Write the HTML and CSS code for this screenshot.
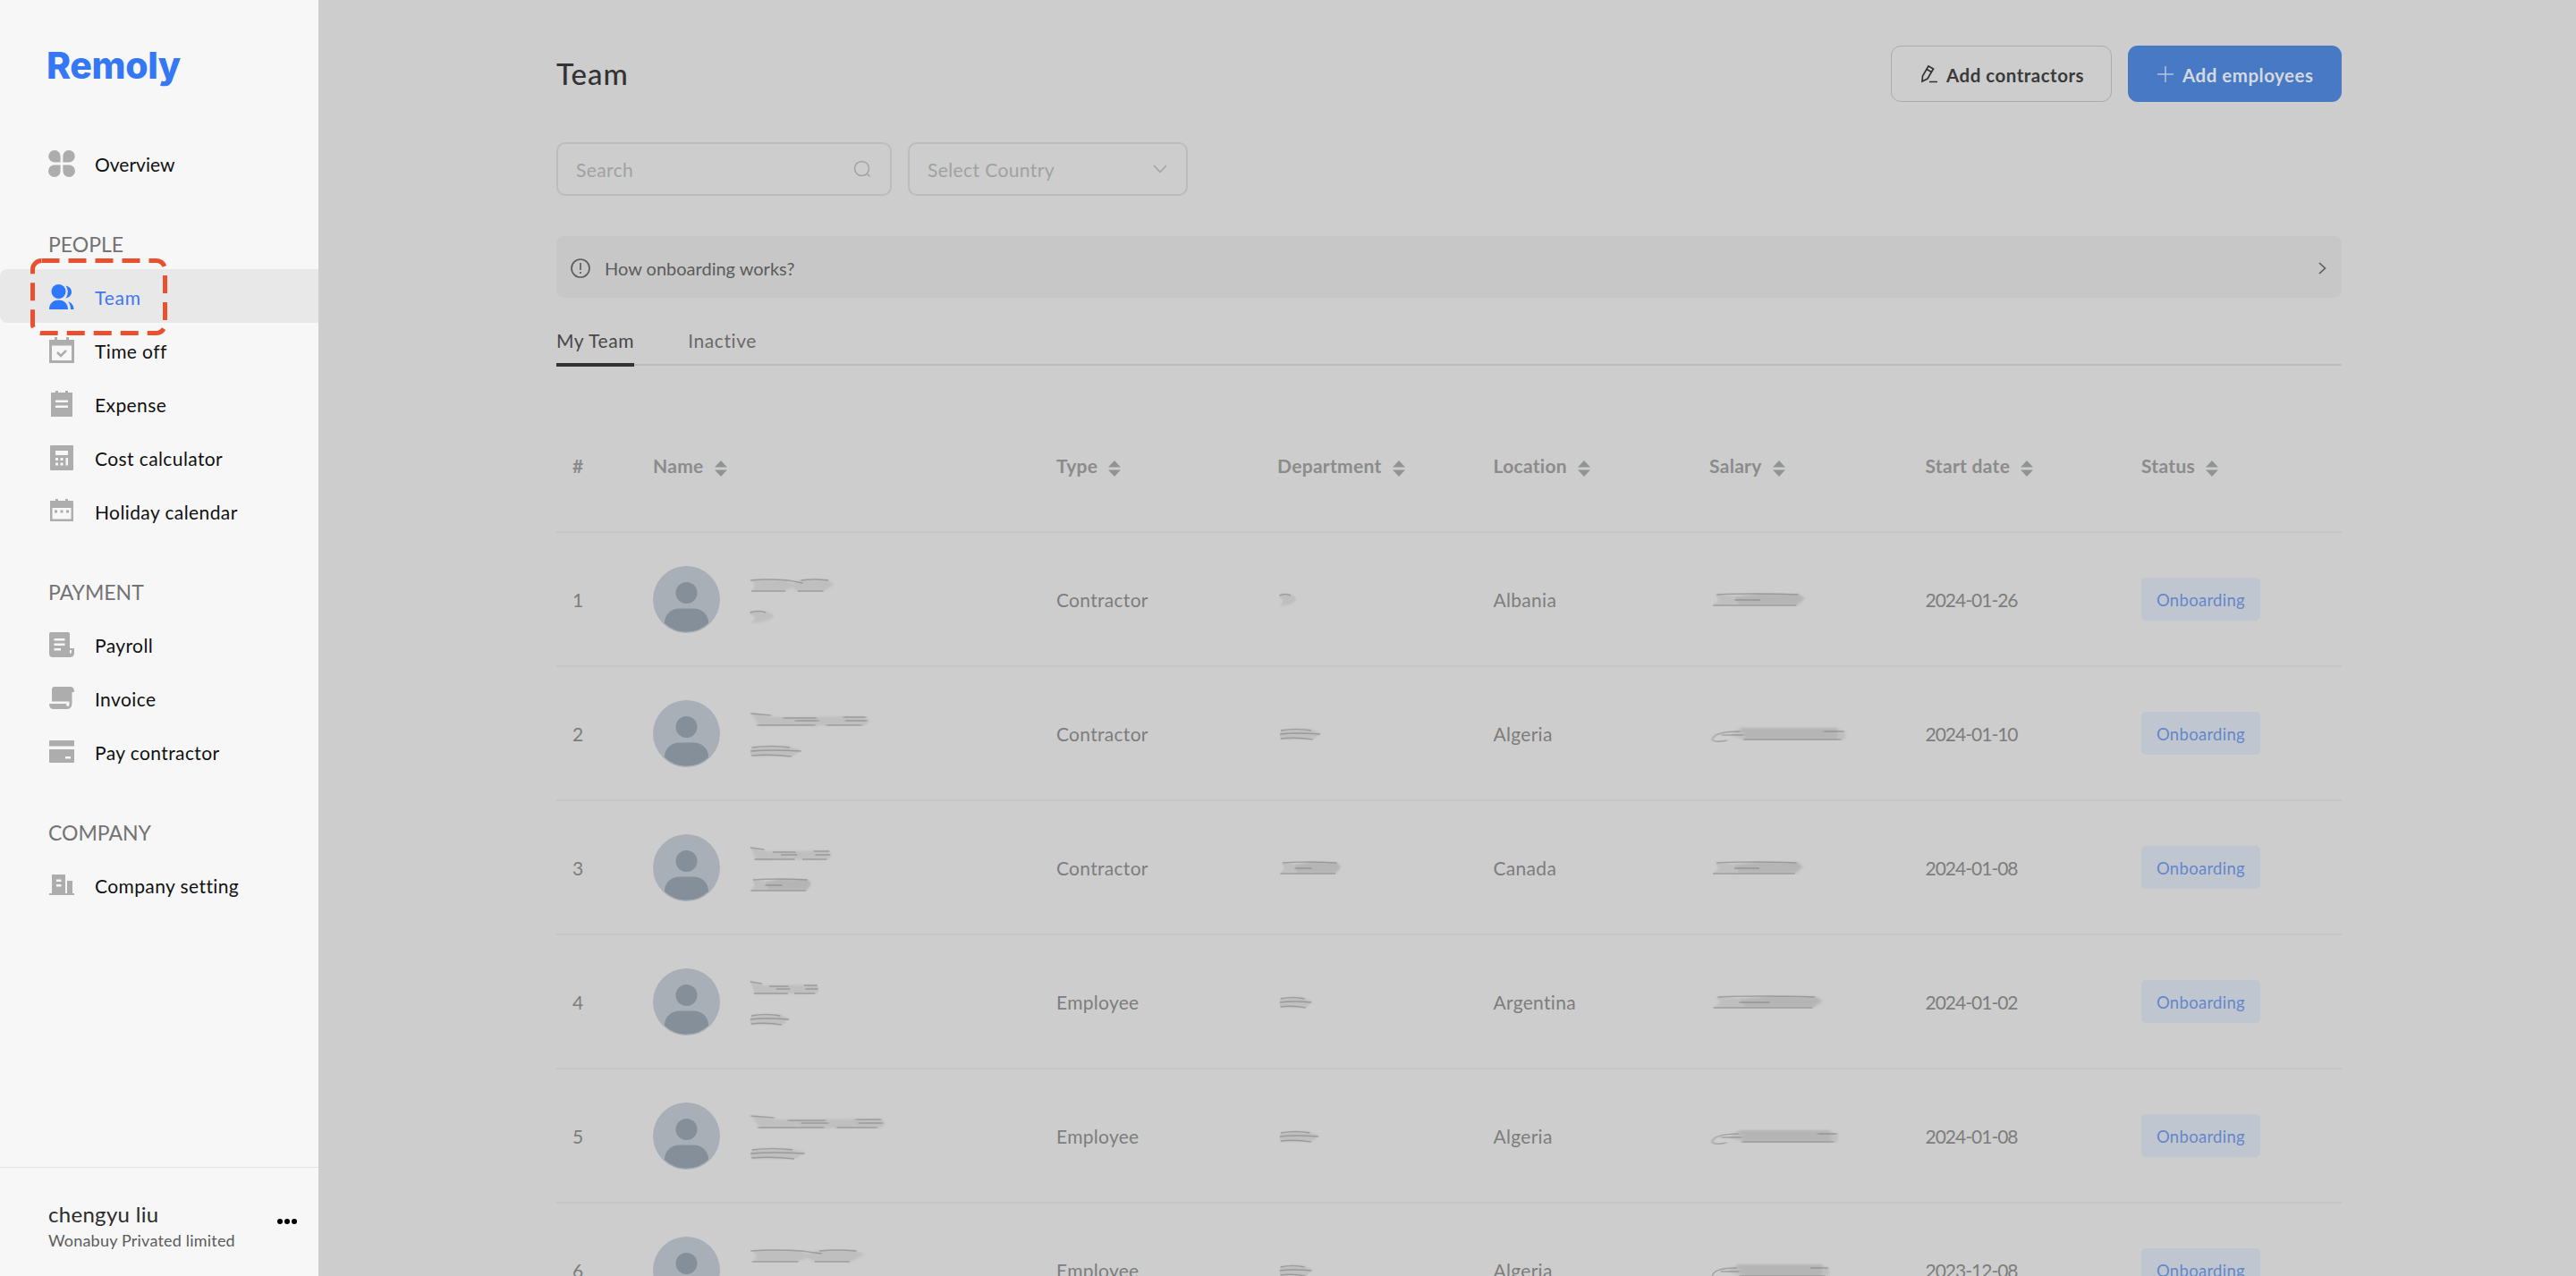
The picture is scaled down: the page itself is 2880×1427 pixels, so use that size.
FILE: index.html
```html
<!DOCTYPE html>
<html lang="en">
<head>
    <meta charset="UTF-8">
    <meta name="viewport" content="width=device-width, initial-scale=1.0">
    <title>Remoly - Team</title>
    <link rel="stylesheet" href="styles.css">
</head>
<body>

    <aside class="sidebar">
        <div class="logo">Remoly</div>

        <nav class="menu">
            <a class="menu-item overview">
                <svg class="menu-icon" viewBox="0 0 30 30"><path d="M7 0a6.6 6.6 0 0 1 6.6 7v6.6H7A6.8 6.8 0 0 1 7 0zM23 0a6.8 6.8 0 0 1 0 13.6h-6.6V7A6.6 6.6 0 0 1 23 0zM7 16.4h6.6V23A6.8 6.8 0 1 1 7 16.4zM16.4 16.4H23a6.8 6.8 0 1 1-6.6 6.6z"/></svg>
                <span>Overview</span>
            </a>

            <h3 class="menu-title">PEOPLE</h3>
            <a class="menu-item active">
                <svg class="menu-icon" viewBox="0 0 30 30"><circle cx="11.500" cy="9" r="8"/><path d="M1 29c0-6 4-10.500 10.500-10.500S22 23 22 29zM19.500 2.500c4 1 6.500 3.500 6.500 7s-2.500 6-6.500 7c3-4.500 3-9.500 0-14zM22 20c4 1.500 6.500 4.500 6.500 9H25c0-3.500-1-6.500-3-9z"/></svg>
                <span>Team</span>
                <div class="highlight">
                    <svg viewBox="0 0 153 86"><rect x="2.500" y="2.500" width="148" height="81" rx="10" stroke-dasharray="20 10"/></svg>
                </div>
            </a>
            <a class="menu-item">
                <svg class="menu-icon" viewBox="0 0 30 30"><path fill-rule="evenodd" d="M1 3h6V0h3v3h10V0h3v3h6v26H1zM4 9.500v16.500h22V9.500z"/><path class="line" d="M10 17l4 4 6-6"/></svg>
                <span>Time off</span>
            </a>
            <a class="menu-item">
                <svg class="menu-icon" viewBox="0 0 30 30"><path fill-rule="evenodd" d="M3 2h5V0h3v2h8V0h3v2h5v27H3zM8 10.500v2.500h14v-2.500zM8 16.500V19h14v-2.500z"/></svg>
                <span>Expense</span>
            </a>
            <a class="menu-item">
                <svg class="menu-icon" viewBox="0 0 30 30"><path fill-rule="evenodd" d="M3 1h24q1 0 1 1v26q0 1-1 1H3q-1 0-1-1V2q0-1 1-1zM8 7v5h14V7zM8 15v3h3v-3zM13.500 15v3h3v-3zM19.500 15v8.500H22V15zM8 20.500v3h3v-3zM13.500 20.500v3h3v-3z"/></svg>
                <span>Cost calculator</span>
            </a>
            <a class="menu-item">
                <svg class="menu-icon" viewBox="0 0 30 30"><path fill-rule="evenodd" d="M2 3h6V1h3v2h8V1h3v2h5q1 0 1 1v22H2zM4.500 11v12.500h21V11z"/><path d="M7 13.500h3v3H7zM13.500 13.500h3v3h-3zM20 13.500h3v3h-3z"/></svg>
                <span>Holiday calendar</span>
            </a>

            <h3 class="menu-title">PAYMENT</h3>
            <a class="menu-item">
                <svg class="menu-icon" viewBox="0 0 30 30"><path fill-rule="evenodd" d="M3 1h19q2 0 2 2v16h5v5q0 5-5 5H5q-4 0-4-4V3q0-2 2-2zM6.500 8v2.500h12V8zM6.500 13.500V16h12v-2.500zM6.500 19v2.500h7.500V19zM24 21v4q2 0 2-2v-2z"/></svg>
                <span>Payroll</span>
            </a>
            <a class="menu-item">
                <svg class="menu-icon" viewBox="0 0 30 30"><path d="M7 2h18q4 0 4 6h-2.500v12q0 7-5.500 7H6q-5 0-5-6h19q0 3 2 3 1.500 0 1.500-3v-2.500H4V5q0-3 3-3z"/></svg>
                <span>Invoice</span>
            </a>
            <a class="menu-item">
                <svg class="menu-icon" viewBox="0 0 30 30"><path fill-rule="evenodd" d="M2 2h26q1 0 1 1v5.500H1V3q0-1 1-1zM1 12h28v14q0 1-1 1H2q-1 0-1-1zM19 20v2.500h6V20z"/></svg>
                <span>Pay contractor</span>
            </a>

            <h3 class="menu-title">COMPANY</h3>
            <a class="menu-item">
                <svg class="menu-icon" viewBox="0 0 30 30"><path fill-rule="evenodd" d="M4 3h15v21h2V10h6v14h2v2H1v-2h3zM9 8.500V11h5.500V8.500zM9 14v2.500h5.500V14z"/></svg>
                <span>Company setting</span>
            </a>
        </nav>

        <div class="account">
            <div>
                <div class="account-name">chengyu liu</div>
                <div class="account-company">Wonabuy Privated limited</div>
            </div>
            <svg class="dots" viewBox="0 0 22 6"><circle cx="3" cy="3" r="3"/><circle cx="11" cy="3" r="3"/><circle cx="19" cy="3" r="3"/></svg>
        </div>
    </aside>

    <main class="content">
        <header class="page-header">
            <h1>Team</h1>
            <div class="buttons">
                <button class="btn">
                    <svg width="20" height="21" viewBox="0 0 20 21"><path d="M2 19l.5-6L9 2l5.500 3L8 16zM7 5.500l5.500 3M10 19.500h9"/></svg>
                    <span>Add contractors</span>
                </button>
                <button class="btn btn-primary">
                    <svg width="18" height="18" viewBox="0 0 18 18"><path d="M9 0v18M0 9h18"/></svg>
                    <span>Add employees</span>
                </button>
            </div>
        </header>

        <div class="filters">
            <div class="field search">
                <span>Search</span>
                <svg width="20" height="20" viewBox="0 0 20 20"><circle cx="9.500" cy="9.500" r="8"/><path d="M15.500 15.500l3 3"/></svg>
            </div>
            <div class="field select">
                <span>Select Country</span>
                <svg width="16" height="10" viewBox="0 0 16 10"><path d="M1 1l7 7.500L15 1"/></svg>
            </div>
        </div>

        <div class="banner">
            <svg width="22" height="22" viewBox="0 0 22 22"><circle cx="11" cy="11" r="10"/><path d="M11 5v8M11 15v2"/></svg>
            <span>How onboarding works?</span>
            <svg class="arrow" width="9" height="14" viewBox="0 0 9 14"><path d="M1 1l6.500 6L1 13"/></svg>
        </div>

        <div class="tabs">
            <div class="tab selected">My Team</div>
            <div class="tab">Inactive</div>
        </div>

        <div class="table">
            <div class="row table-head" id="table-head"></div>
            <div id="table-body"></div>
        </div>
    </main>

    <script>
        const columns = ["#", "Name", "Type", "Department", "Location", "Salary", "Start date", "Status"];

        // Private data is smudged out: [width, shape]
        const people = [
            { name: [96, "split"], job: [28, "hook"], type: "Contractor", department: [20, "hook"], location: "Albania", salary: [106, "block"], date: "2024-01-26" },
            { name: [134, "wedge"], job: [60, "lines"], type: "Contractor", department: [48, "lines"], location: "Algeria", salary: [150, "tail"], date: "2024-01-10" },
            { name: [92, "wedge"], job: [70, "block"], type: "Contractor", department: [70, "block"], location: "Canada", salary: [104, "block"], date: "2024-01-08" },
            { name: [78, "wedge"], job: [46, "lines"], type: "Employee", department: [38, "lines"], location: "Argentina", salary: [126, "block"], date: "2024-01-02" },
            { name: [152, "wedge"], job: [64, "lines"], type: "Employee", department: [46, "lines"], location: "Algeria", salary: [142, "tail"], date: "2024-01-08" },
            { name: [130, "split"], job: [56, "lines"], type: "Employee", department: [38, "lines"], location: "Algeria", salary: [132, "tail"], date: "2023-12-08" }
        ];

        const shapes = {
            split: '<path class="smear" d="M2 1L42 1L50 5L60 1L90 1L99 6L88 14L55 14L50 10L40 14L3 14L6 8z"/><path class="streak" d="M1 2Q20 0 45 2L62 5M60 2Q75 0 92 2M2 14H42M56 14H86"/>',
            hook: '<path class="smear" d="M2 1H55Q90 3 98 7Q80 14 2 15Q40 8 2 5z"/><path class="streak" d="M2 3Q40 0 65 3"/>',
            lines: '<path class="smear" d="M6 3L70 2L98 7L80 14L3 14L1 8z"/><path class="streak" d="M4 4Q40 1 75 4M2 8Q40 6 96 8M4 13Q40 11 78 14"/>',
            wedge: '<path class="smear" d="M1 0L22 5L96 4L100 9L97 14L8 15z"/><path class="streak" d="M1 1L18 3M28 6H56M78 5H97M38 9H58M80 9H98M6 14H55M64 14H94"/>',
            block: '<path class="smear" d="M4 1L30 4L50 1L92 1L100 6L92 14L2 14L8 8z"/><path class="smear" d="M25 4L50 1L94 2L97 7L90 13L30 13z"/><path class="streak" d="M6 2Q40 0 92 2M2 14H90M25 8L52 8"/>',
            tail: '<path class="smear" d="M22 1L92 1L100 5V14H24L14 9z"/><path class="smear" d="M22 1H94V14H26z"/><path class="streak" d="M22 5Q2 5 1 14Q2 18 12 15M8 9H24M24 14H97M84 5H99"/>'
        };

        const sortIcon = '<svg class="sort" viewBox="0 0 14 18"><path d="M7 0l7 7.500H0zM7 18l7-7.500H0z"/></svg>';

        const avatar = `<svg class="avatar" viewBox="0 0 75 75">
            <circle cx="37.500" cy="37.500" r="37.500" fill="#a8afb7"/>
            <circle cx="37.500" cy="30" r="12" fill="#848f99"/>
            <path d="M13 64V62C14 53 21 47.500 30 47.500H45C54 47.500 61 53 62 62V64A36 36 0 0 1 13 64z" fill="#848f99"/>
        </svg>`;

        function smudge([width, shape]) {
            return `<svg class="smudge" width="${width}" height="16" viewBox="0 0 100 16" preserveAspectRatio="none">${shapes[shape]}</svg>`;
        }

        document.getElementById('table-head').innerHTML = columns
            .map(column => `<div>${column}${column === "#" ? "" : sortIcon}</div>`)
            .join('');

        document.getElementById('table-body').innerHTML = people.map((person, index) => `
            <div class="row">
                <div>${index + 1}</div>
                <div class="person">${avatar}<div class="person-info">${smudge(person.name)}${smudge(person.job)}</div></div>
                <div>${person.type}</div>
                <div class="hidden-value">${smudge(person.department)}</div>
                <div>${person.location}</div>
                <div class="hidden-value">${smudge(person.salary)}</div>
                <div class="date">${person.date}</div>
                <div><span class="badge">Onboarding</span></div>
            </div>`).join('');
    </script>
</body>
</html>
```
FILE: styles.css
```css
* {
    box-sizing: border-box;
}

body {
    margin: 0;
    height: 1427px;
    display: flex;
    overflow: hidden;
    background: #cdcdcd;
    font-family: Lato, sans-serif;
    font-size: 21px;
}

svg {
    display: block;
    flex-shrink: 0;
}

/* Sidebar */
.sidebar {
    width: 356px;
    height: 1427px;
    flex-shrink: 0;
    display: flex;
    flex-direction: column;
    background: #f7f7f7;
}

.logo {
    height: 152px;
    padding: 48px 0 0 52px;
    font-family: Inter, sans-serif;
    font-size: 41px;
    font-weight: 800;
    line-height: 50px;
    letter-spacing: -0.4px;
    color: #3478f6;
}

.menu {
    flex: 1;
}

.menu-item {
    position: relative;
    height: 60px;
    padding: 2px 0 0 54px;
    display: flex;
    align-items: center;
    gap: 22px;
    color: #111;
    letter-spacing: 0.4px;
}

.menu-item.overview {
    letter-spacing: 0;
}

.menu-icon {
    width: 30px;
    height: 30px;
    margin-top: -1px;
    fill: #adadad;
}

.menu-icon .line {
    fill: none;
    stroke: #adadad;
    stroke-width: 2.5;
}

.menu-item.active {
    background: #e8e8e8;
    border-radius: 8px 0 0 8px;
    color: #3f76f0;
    letter-spacing: 0.8px;
}

.active .menu-icon {
    fill: #2f78fb;
}

.menu-title {
    height: 89px;
    margin: 0;
    padding: 46px 0 0 54px;
    font-size: 23px;
    line-height: 30px;
    font-weight: 400;
    color: #737373;
}

/* Dashed frame around the active item */
.highlight {
    position: absolute;
    z-index: 1;
    left: 34px;
    top: -12px;
    width: 153px;
    height: 86px;
}

.highlight rect {
    fill: none;
    stroke: #e8502f;
    stroke-width: 5;
}

.account {
    height: 122px;
    padding: 37px 24px 0 54px;
    display: flex;
    justify-content: space-between;
    border-top: 1px solid #e2e2e2;
}

.account-name {
    font-size: 24px;
    line-height: 30px;
    letter-spacing: 0.3px;
    color: #2c2c2c;
}

.account-company {
    font-size: 18px;
    line-height: 29px;
    letter-spacing: 0.2px;
    color: #5c5c5c;
}

.dots {
    width: 22px;
    height: 6px;
    margin-top: 20px;
}

/* Content */
.content {
    width: 1996px;
    margin-left: 266px;
}

.page-header {
    height: 159px;
    padding-top: 51px;
    display: flex;
    justify-content: space-between;
}

h1 {
    margin: 10px 0 0;
    font-size: 33px;
    line-height: 42px;
    font-weight: 500;
    letter-spacing: 1px;
    color: #333;
}

.buttons {
    display: flex;
    gap: 18px;
}

.btn {
    width: 247px;
    height: 63px;
    padding: 3px 0 0 32px;
    display: flex;
    align-items: center;
    gap: 9px;
    background: none;
    border: 1.5px solid #ababab;
    border-radius: 11px;
    color: #3a3a3a;
    font: bold 20.5px Lato, sans-serif;
    letter-spacing: 0.5px;
}

.btn svg {
    margin-top: -3px;
    fill: none;
    stroke: #333;
    stroke-width: 1.7;
}

.btn-primary {
    width: 239px;
    padding-left: 33px;
    gap: 10px;
    background: #4779c4;
    border: none;
    color: #d4d9e0;
}

.btn-primary svg {
    stroke: #b4c4de;
    stroke-width: 1.5;
}

.filters {
    display: flex;
    gap: 18px;
}

.field {
    height: 60px;
    padding: 0 21px 0 20px;
    display: flex;
    align-items: center;
    justify-content: space-between;
    border: 2px solid #bcbcbc;
    border-radius: 10px;
    color: #a0a2a2;
    letter-spacing: 0.4px;
}

.field svg {
    fill: none;
    stroke: #a0a2a2;
    stroke-width: 1.5;
}

.search {
    width: 375px;
}

.select {
    width: 313px;
}

.banner {
    height: 69px;
    margin-top: 45px;
    padding: 3px 17px 0 16px;
    display: flex;
    align-items: center;
    gap: 16px;
    background: #c7c7c7;
    border-radius: 8px;
    color: #5c5c5c;
    font-size: 20px;
}

.banner svg {
    margin-top: -1px;
    fill: none;
    stroke: #5c5c5c;
    stroke-width: 1.7;
}

.banner .arrow {
    margin-left: auto;
}

.tabs {
    height: 76px;
    display: flex;
    gap: 60px;
    border-bottom: 2px solid #bdbdbd;
}

.tab {
    height: 77px;
    padding-top: 33px;
    line-height: 30px;
    letter-spacing: 0.6px;
    color: #6a6a6a;
}

.tab.selected {
    color: #484848;
    border-bottom: 4px solid #333;
}

/* Table */
.row {
    display: grid;
    grid-template-columns: 90px 451px 247px 241.5px 241.5px 241.5px 241.5px 241px;
    align-items: center;
    height: 150px;
    border-bottom: 2px solid #c5c5c5;
    color: #7d7d7d;
    letter-spacing: 0.3px;
}

.row > div {
    padding-left: 18px;
}

.table-head {
    height: 187px;
    padding-top: 38px;
    color: #8b8b8b;
    font-weight: bold;
}

.table-head > div {
    display: flex;
    align-items: center;
}

.sort {
    width: 14px;
    height: 18px;
    margin: 7px 0 0 12px;
    fill: #929494;
}

.person {
    display: flex;
    align-items: center;
    gap: 33px;
}

.person-info {
    padding-top: 4px;
    display: flex;
    flex-direction: column;
    gap: 19px;
}

.avatar {
    width: 75px;
    height: 75px;
}

.row > .hidden-value {
    padding: 1px 0 0 20px;
}

.row > .date {
    letter-spacing: -1px;
}

/* Smudged values */
.smudge {
    overflow: visible;
}

.smear {
    fill: #999;
    opacity: 0.25;
    filter: blur(1px);
}

.streak {
    fill: none;
    stroke: #777;
    stroke-width: 1.5;
    opacity: 0.5;
    filter: blur(0.6px);
    vector-effect: non-scaling-stroke;
}

.badge {
    display: inline-block;
    width: 133px;
    height: 48px;
    padding-top: 1px;
    line-height: 48px;
    text-align: center;
    background: #c0c6cf;
    border-radius: 5px;
    color: #6488cb;
    font-size: 18.5px;
}
```
